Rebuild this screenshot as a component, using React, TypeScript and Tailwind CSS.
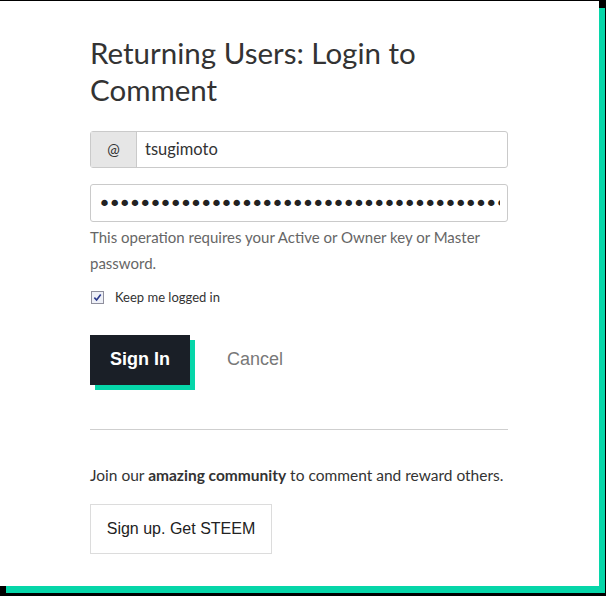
import { useState } from "react";

const App = () => {
  const [keep, setKeep] = useState(true);

  return (
    <div className="min-h-[596px] w-[606px] overflow-hidden bg-black pt-px">
      <div className="h-[585px] w-[599px] bg-white shadow-[6px_7px_0_#06d6a9]">
        <div className="w-[418px] pl-[90px] pt-[33px] box-content">
          <h3 className="text-[29.5px] leading-[37px] text-[#333] font-['Lato',sans-serif]">
            Returning Users: Login to Comment
          </h3>

          <div className="mt-[23px] flex h-[37px] rounded-[3px] border border-[#cacaca]">
            <span className="flex w-[46px] items-center justify-center border-r border-[#cacaca] bg-[#e6e6e6] text-[15px] text-[#333] font-['Lato',sans-serif]">
              @
            </span>
            <input
              className="min-w-0 flex-1 px-[8px] text-[16.5px] text-[#333] outline-none font-['Lato',sans-serif]"
              defaultValue="tsugimoto"
            />
          </div>

          <div className="mt-[16px] flex h-[38px] overflow-hidden rounded-[3px] border border-[#cacaca]">
            <input
              type="password"
              className="min-w-0 flex-1 px-[7px] text-[22px] text-[#222] outline-none font-['DejaVu_Sans',sans-serif] tracking-[-2.8px]"
              defaultValue="5KQwrPbwdL6PhXujxW37FSSQZ1JiwsST4cqQzDeyXtP79zkvFD3XX1abc"
            />
          </div>

          <p className="mt-[2px] text-[15px] leading-[26px] text-[#666] font-['Lato',sans-serif]">
            This operation requires your Active or Owner key or Master password.
          </p>

          <label className="mt-[12px] flex items-center gap-[11px] text-[13px] text-[#333] font-['Lato',sans-serif]">
            <span
              onClick={() => setKeep(!keep)}
              className="ml-px flex h-[13px] w-[13px] items-center justify-center border border-[#8f8f9d] bg-[#eef0f7]"
            >
              {keep && (
                <svg viewBox="0 0 10 10" className="h-[9px] w-[9px]">
                  <path d="M1.5 5.2 L4 7.8 L8.6 1.6" fill="none" stroke="#2c3a8c" strokeWidth="1.8" />
                </svg>
              )}
            </span>
            Keep me logged in
          </label>

          <div className="mt-[27px] flex items-center gap-[37px]">
            <button className="h-[50px] w-[100px] bg-[#1a1f27] text-[18px] font-bold text-white shadow-[5px_5px_0_#06d6a9] font-['Liberation_Sans',Arial,sans-serif]">
              Sign In
            </button>
            <button className="text-[18px] text-[#787878] font-['Liberation_Sans',Arial,sans-serif]">
              Cancel
            </button>
          </div>

          <hr className="mt-[44px] border-t border-[#cfcfcf]" />

          <p className="mt-[34px] text-[15.5px] text-[#333] font-['Lato',sans-serif]">
            Join our <strong className="font-bold">amazing community</strong> to comment and reward others.
          </p>

          <button className="mt-[17px] h-[50px] w-[182px] border border-[#dcdcdc] text-[16px] text-[#222] font-['Liberation_Sans',Arial,sans-serif]">
            Sign up. Get STEEM
          </button>
        </div>
      </div>
    </div>
  );
};

export default App;
